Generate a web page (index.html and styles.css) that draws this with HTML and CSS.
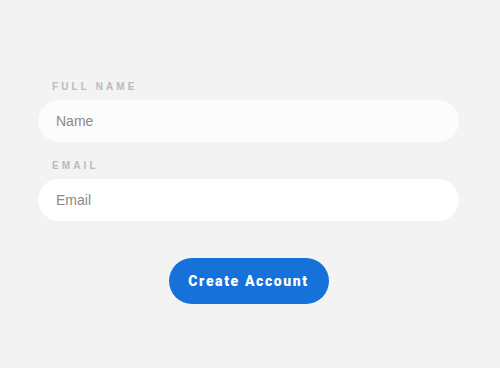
FILE: index.html
```html
<!DOCTYPE html>
<html lang="en">
<head>
    <meta charset="UTF-8">
    <meta name="viewport" content="width=device-width, initial-scale=1.0">
    <title>Create Account</title>
    <link rel="stylesheet" href="styles.css">
</head>
<body>
    <form class="signup">
        <div class="field">
            <label for="name">Full Name</label>
            <input id="name" type="text" placeholder="Name" class="soft">
        </div>
        <div class="field">
            <label for="email">Email</label>
            <input id="email" type="email" placeholder="Email">
        </div>
        <div class="actions">
            <button type="button">Create Account</button>
        </div>
    </form>
</body>
</html>
```

FILE: styles.css
```css
body {
    margin: 0;
    background: #f3f3f3;
    font-family: "Liberation Sans", Arial, sans-serif;
}
.signup {
    padding: 81px 41px 0 38px;
}
.field {
    margin-bottom: 18px;
}
.field label {
    display: block;
    padding-left: 14px;
    margin-bottom: 7px;
    font-size: 10px;
    line-height: 12px;
    font-weight: bold;
    letter-spacing: 3.1px;
    text-transform: uppercase;
    color: #bababa;
}
.field input {
    display: block;
    box-sizing: border-box;
    width: 100%;
    height: 42px;
    padding: 0 18px;
    border: none;
    border-radius: 21px;
    background: #fff;
    font-family: inherit;
    font-size: 14px;
    color: #555;
    outline: none;
}
.field input.soft {
    background: #fcfcfc;
}
.field input::placeholder {
    color: #8a8a8a;
}
.actions {
    display: flex;
    justify-content: center;
    padding-top: 19px;
}
button {
    width: 160px;
    height: 46px;
    border: none;
    border-radius: 23px;
    background: #1672d8;
    color: #fff;
    font-family: Roboto, "Liberation Sans", sans-serif;
    font-size: 14px;
    font-weight: 900;
    letter-spacing: 1.6px;
    cursor: pointer;
}
```
